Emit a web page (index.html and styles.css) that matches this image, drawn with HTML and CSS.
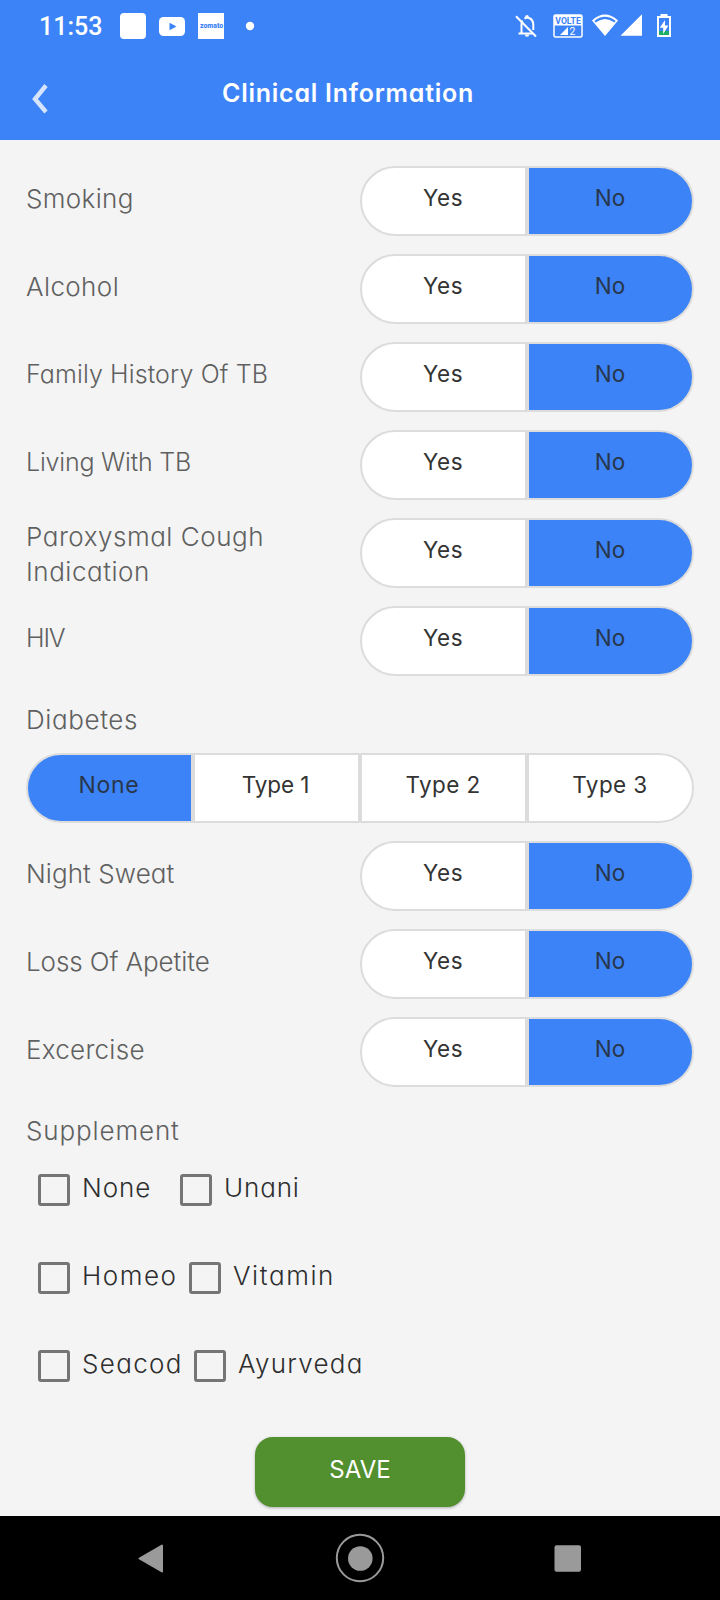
FILE: index.html
```html
<!DOCTYPE html>
<html lang="en">
<head>
<meta charset="utf-8">
<title>Clinical Information</title>
<link rel="stylesheet" href="styles.css">
</head>
<body>
<header class="top">
  <div class="status">
    <span class="clock">11:53</span>
    <svg class="status-left" width="136" height="28" viewBox="119 12 136 28">
      <rect x="120" y="13" width="26" height="26" rx="4" fill="#fff"/>
      <rect x="159" y="17" width="26" height="19" rx="4.5" fill="#fff"/>
      <path d="M169.500 22.700v7.600l7-3.800z" fill="#3c83f7"/>
      <rect x="198" y="13" width="26" height="26" fill="#fff"/>
      <text class="zomato" x="200" y="28.200" textLength="23" lengthAdjust="spacingAndGlyphs">zomato</text>
      <circle cx="250" cy="26" r="4.200" fill="#fff"/>
    </svg>
    <svg class="status-right" width="160" height="28" viewBox="514 12 160 28">
      <g fill="none" stroke="#fff" stroke-width="2">
        <path d="M518.500 33.500h14M521.500 33V24.500q0-2.500 1-4M524.500 18.600q1.200-.9 2.500-1.100 6.300.8 6.300 7.500v5"/>
        <path d="M516 16.300l20 20.200"/>
      </g>
      <circle cx="527" cy="16.600" r="1.700" fill="#fff"/>
      <path d="M524.700 34.500h4.600q-.3 2.200-2.300 2.200t-2.300-2.200z" fill="#fff"/>
      <rect x="554" y="15" width="28" height="22" rx="1.500" fill="none" stroke="#fff" stroke-width="1.500"/>
      <path d="M554 15h28v10.500h-28z" fill="#fff"/>
      <text class="volte" x="555.300" y="23.600" textLength="25.500" lengthAdjust="spacingAndGlyphs">VOLTE</text>
      <path d="M560 35h8v-8z" fill="#fff"/>
      <text class="sim" x="569.500" y="35">2</text>
      <path d="M592 20.500q13-11.800 26 0l-13 15.500z" fill="#fff"/>
      <path d="M595 21.800q10-7.800 20 0" fill="none" stroke="#3c83f7" stroke-width="2"/>
      <path d="M620.500 35.700h21.500v-21.500z" fill="#fff"/>
      <path d="M660.500 14h7v2h3.500v21h-14v-21h3.500z" fill="#fff"/>
      <path d="M659 18h10v17h-10z" fill="#3c83f7"/>
      <path d="M659 31h10v4h-10z" fill="#1fae68"/>
      <path d="M665 20l-5.200 7.800h3.400v6.200l5.200-8.400h-3.400z" fill="#fff"/>
    </svg>
  </div>
  <div class="title-bar">
    <svg class="back" width="18" height="32" viewBox="0 0 18 32"><path d="M15 2.500L4 16l11 13" fill="none" stroke="#d6e4fd" stroke-width="4.400"/></svg>
    <h1 class="title">Clinical Information</h1>
  </div>
</header>
<main class="form">
  <div class="row"><span class="label smoking">Smoking</span><div class="toggle"><span class="seg yes">Yes</span><span class="seg on no">No</span></div></div>
  <div class="row"><span class="label alcohol">Alcohol</span><div class="toggle"><span class="seg yes">Yes</span><span class="seg on no">No</span></div></div>
  <div class="row"><span class="label family">Family History Of TB</span><div class="toggle"><span class="seg yes">Yes</span><span class="seg on no">No</span></div></div>
  <div class="row"><span class="label living">Living With TB</span><div class="toggle"><span class="seg yes">Yes</span><span class="seg on no">No</span></div></div>
  <div class="row"><span class="label cough">Paroxysmal Cough<br>Indication</span><div class="toggle"><span class="seg yes">Yes</span><span class="seg on no">No</span></div></div>
  <div class="row"><span class="label hiv">HIV</span><div class="toggle"><span class="seg yes">Yes</span><span class="seg on no">No</span></div></div>
  <div class="heading diabetes">Diabetes</div>
  <div class="toggle wide"><span class="seg on none">None</span><span class="seg type1">Type 1</span><span class="seg type">Type 2</span><span class="seg type">Type 3</span></div>
  <div class="row"><span class="label night">Night Sweat</span><div class="toggle"><span class="seg yes">Yes</span><span class="seg on no">No</span></div></div>
  <div class="row"><span class="label loss">Loss Of Apetite</span><div class="toggle"><span class="seg yes">Yes</span><span class="seg on no">No</span></div></div>
  <div class="row"><span class="label exercise">Excercise</span><div class="toggle"><span class="seg yes">Yes</span><span class="seg on no">No</span></div></div>
  <div class="heading supplement">Supplement</div>
  <div class="checks"><span class="box"></span><span class="opt o-none">None</span><span class="box"></span><span class="opt o-unani">Unani</span></div>
  <div class="checks"><span class="box"></span><span class="opt o-homeo">Homeo</span><span class="box"></span><span class="opt o-vitamin">Vitamin</span></div>
  <div class="checks"><span class="box"></span><span class="opt o-seacod">Seacod</span><span class="box"></span><span class="opt o-ayurveda">Ayurveda</span></div>
  <div class="save">SAVE</div>
</main>
<nav class="nav">
  <svg width="720" height="84" viewBox="0 1516 720 84">
    <path d="M139.500 1558.500L162 1545.500v26z" fill="#9a9a9a" stroke="#9a9a9a" stroke-width="2" stroke-linejoin="round"/>
    <circle cx="360" cy="1558" r="23.200" fill="none" stroke="#9a9a9a" stroke-width="2"/>
    <circle cx="360.300" cy="1558.500" r="12.300" fill="#9a9a9a"/>
    <rect x="554.500" y="1545.300" width="26.500" height="26.500" rx="2" fill="#9a9a9a"/>
  </svg>
</nav>
</body>
</html>
```
FILE: styles.css
```css
* { box-sizing: border-box; }
body {
  margin: 0;
  width: 720px;
  height: 1600px;
  display: flex;
  flex-direction: column;
  background: #f4f4f4;
  font-family: Inter, "Open Sans", sans-serif;
  font-feature-settings: "cv11";
  overflow: hidden;
}
svg { display: block; flex: none; }

.top { height: 140px; background: #3c83f7; color: #fff; }
.status { height: 54px; padding: 12px 46px 0 39px; display: flex; }
.clock { width: 80px; font: 500 25px/30px Roboto, sans-serif; white-space: nowrap; }
.status-right { margin-left: auto; }
.zomato { font: 900 6.5px Roboto, sans-serif; fill: #3c83f7; }
.volte { font: 700 8.500px Roboto, sans-serif; fill: #3c83f7; }
.sim { font: 400 10.500px Roboto, sans-serif; fill: #fff; }
.title-bar { display: flex; padding: 24px 0 0 31px; }
.back { margin-top: 5px; }
.title { margin: -1px 0 0 173px; font-size: 25px; line-height: 32px; font-weight: 600; letter-spacing: .75px; white-space: nowrap; }

.form { height: 1376px; padding: 26px 26px 0; }
.row { display: flex; justify-content: space-between; height: 70px; margin-bottom: 18px; }
.label { font-size: 26px; line-height: 35px; height: 64px; display: flex; align-items: center; font-weight: 350; color: #606060; white-space: nowrap; }
.smoking { letter-spacing: .35px; }
.alcohol { letter-spacing: .4px; }
.family { font-size: 25px; letter-spacing: .12px; }
.living { font-size: 25px; letter-spacing: -.2px; }
.cough { height: 72px; letter-spacing: .53px; }
.hiv { font-size: 25px; letter-spacing: -1.1px; }
.night { letter-spacing: .08px; }
.loss { letter-spacing: -.08px; }
.exercise { letter-spacing: .27px; }

.toggle { display: grid; grid-template-columns: 1fr 1fr; width: 334px; height: 70px; }
.toggle.wide { grid-template-columns: repeat(4, 1fr); width: 668px; margin-bottom: 18px; }
.seg { display: flex; justify-content: center; border: 2px solid #dcdcdc; background: #fff; color: #333; font-size: 22.500px; line-height: 60px; padding-right: 1px; }
.seg:first-child { border-radius: 35px 0 0 35px; }
.seg:last-child { border-radius: 0 35px 35px 0; }
.seg.on { background: #3c83f7; color: #28364a; }
.yes { letter-spacing: .5px; }
.none { font-size: 23px; letter-spacing: .7px; }
.type1 { letter-spacing: -.1px; padding-right: 2px; }
.type { letter-spacing: .4px; }

.heading { font-size: 26px; line-height: 36px; font-weight: 350; color: #606060; }
.diabetes { padding: 8px 0 15px; letter-spacing: .6px; }
.supplement { padding: 8px 0 25px; letter-spacing: .87px; }

.checks { display: flex; height: 32px; margin: 0 0 56px 12px; }
.box { width: 32px; height: 32px; border: 3px solid #757575; border-radius: 3px; }
.opt { margin-left: 12px; font-size: 26px; line-height: 27px; font-weight: 350; color: #2e2e2e; white-space: nowrap; }
.o-none { width: 98px; letter-spacing: .9px; }
.o-unani { letter-spacing: .85px; }
.o-homeo { width: 107px; letter-spacing: 1.550px; }
.o-vitamin { letter-spacing: 1.600px; }
.o-seacod { width: 112px; letter-spacing: 1.350px; }
.o-ayurveda { letter-spacing: 1.250px; }

.save { width: 210px; height: 70px; margin: -1px auto 0; border-radius: 18px; background: #528f2f; color: #fff; font-size: 24px; line-height: 65px; text-align: center; box-shadow: 0 1px 3px rgba(0, 0, 0, .3); }
.nav { height: 84px; background: #000; }
```
